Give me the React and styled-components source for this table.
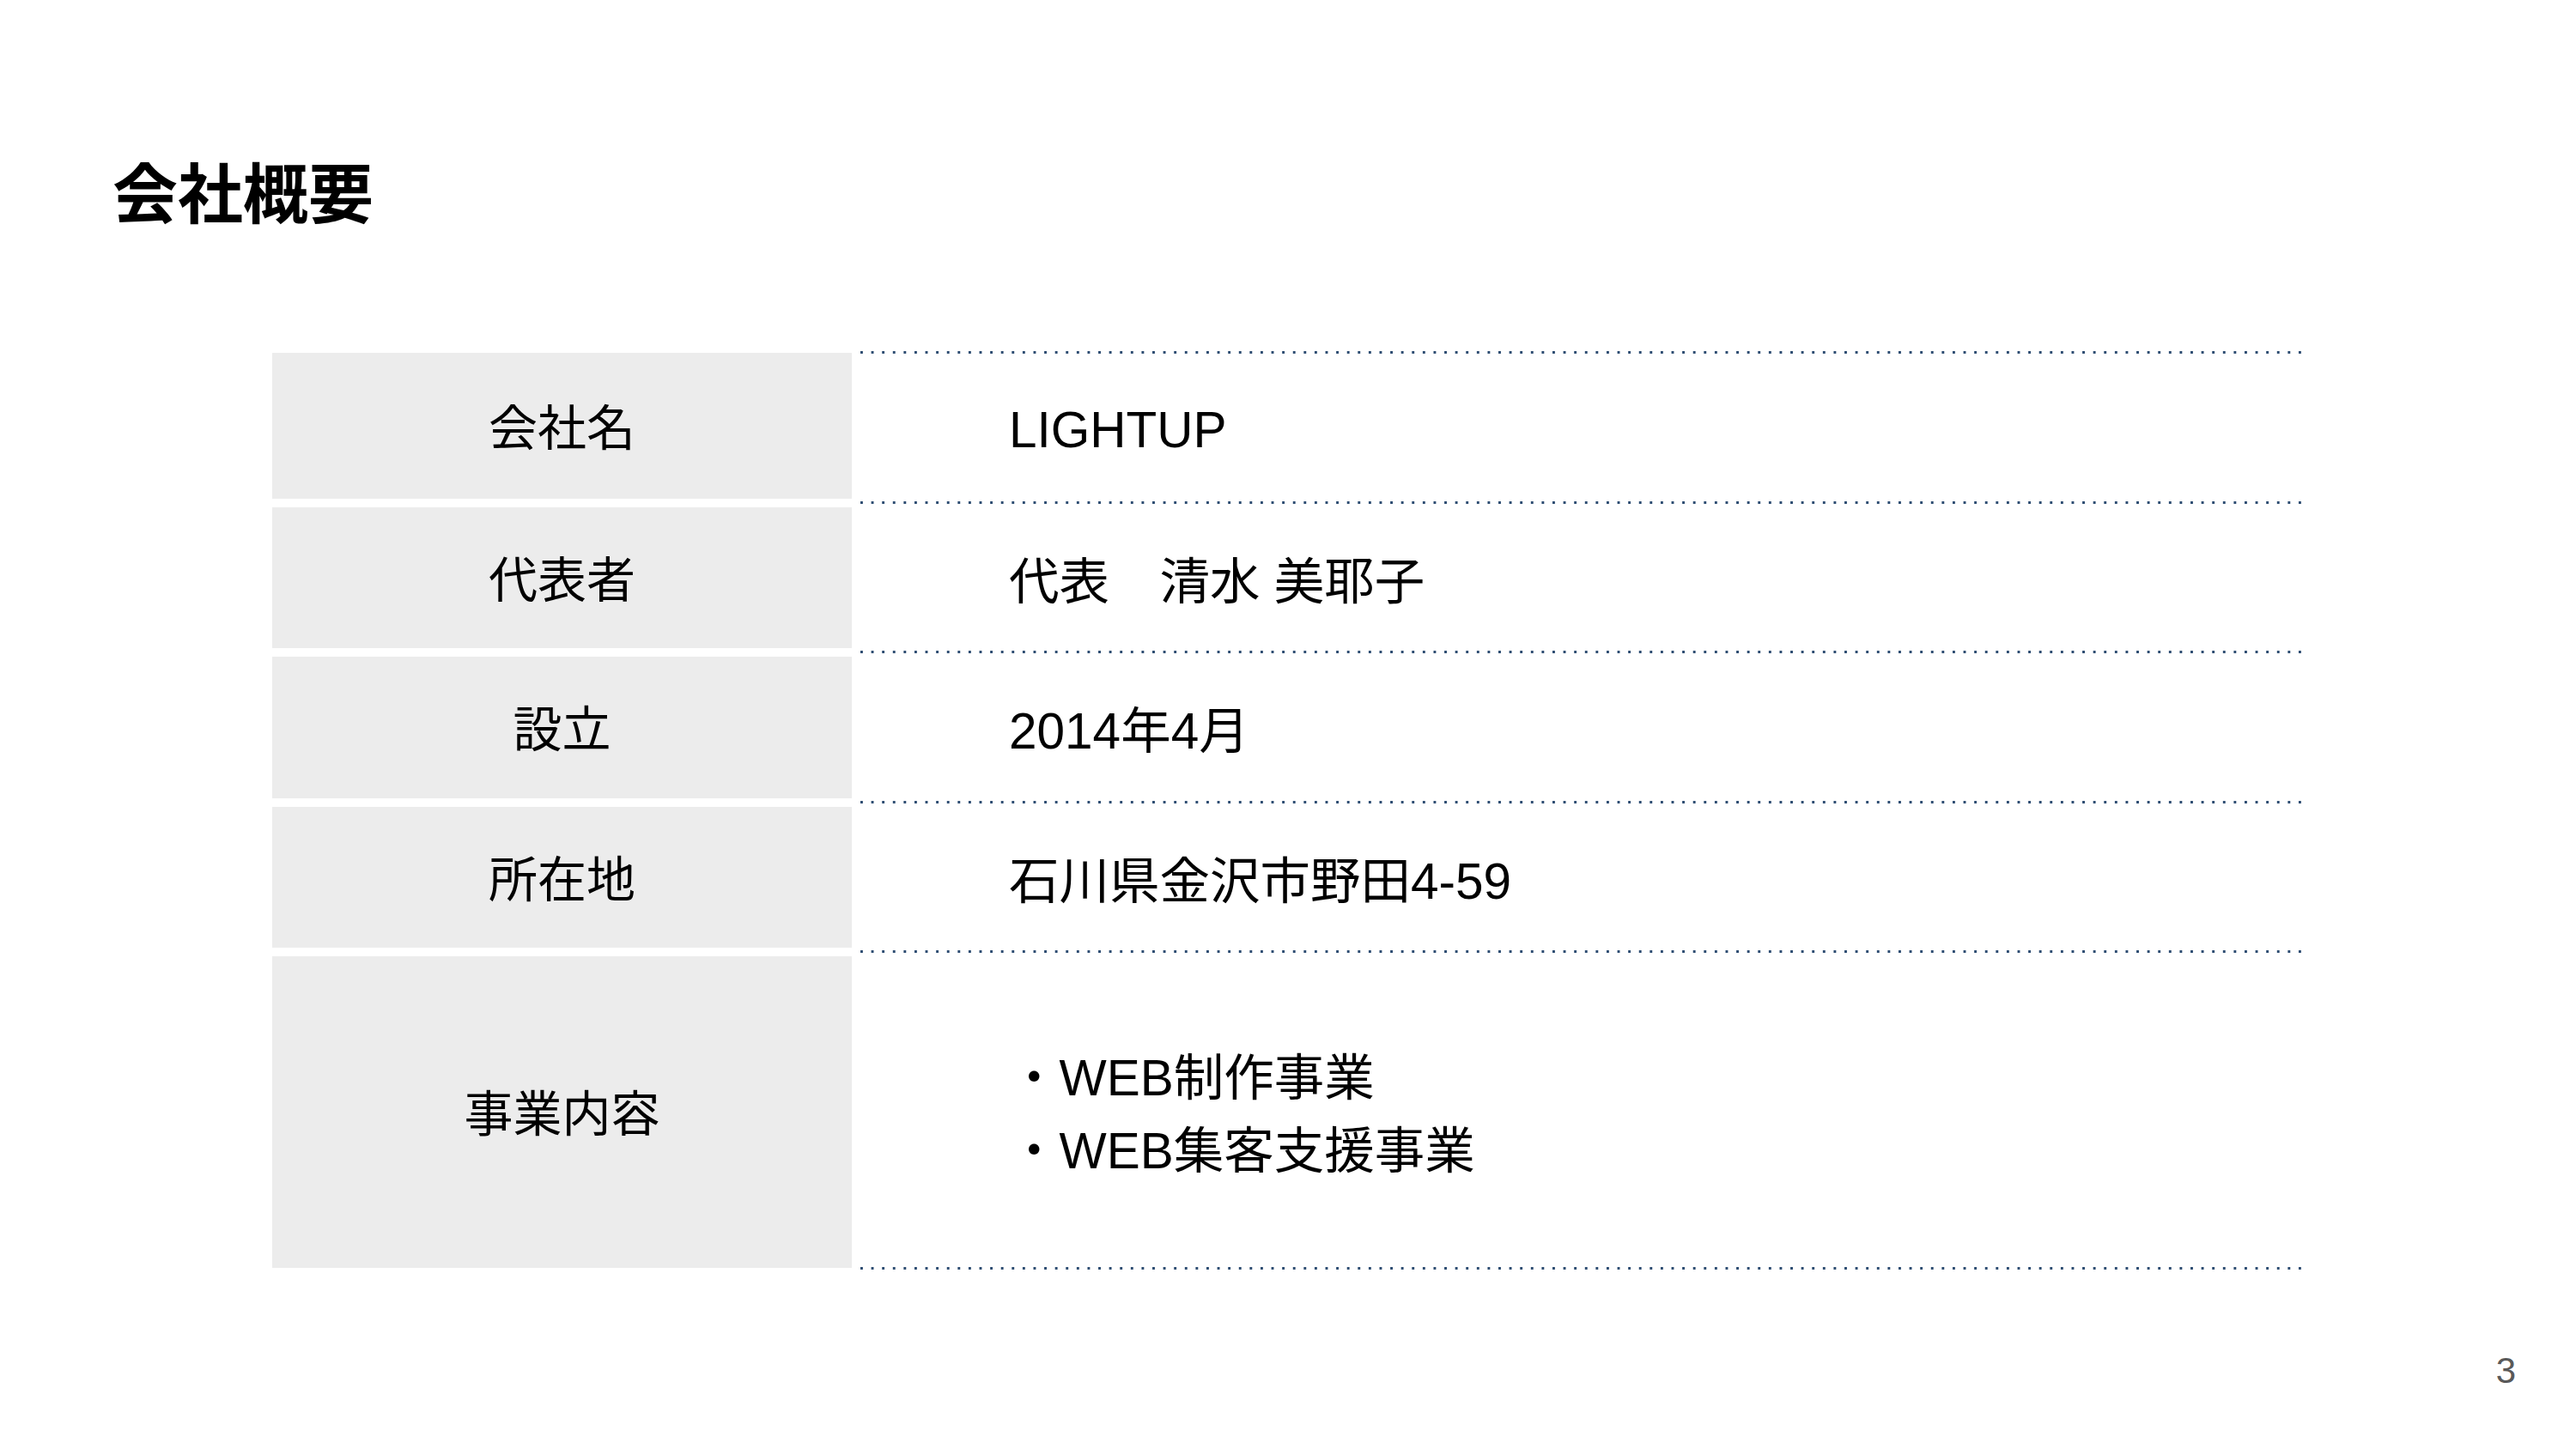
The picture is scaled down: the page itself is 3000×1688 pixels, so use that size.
import React from "react";
import styled, { createGlobalStyle } from "styled-components";

const Global = createGlobalStyle`
  html, body { margin: 0; padding: 0; background: #ffffff; }
  body {
    font-family: "Liberation Sans", "Noto Sans CJK JP", sans-serif;
    color: #000000;
  }
`;

const Slide = styled.div`
  width: 3000px;
  height: 1688px;
  box-sizing: border-box;
  display: flex;
  flex-direction: column;
  background: #ffffff;
`;

const Title = styled.h1`
  margin: 183px 0 0 131px;
  font-family: "Noto Sans CJK JP", sans-serif;
  font-weight: 700;
  font-size: 76px;
  line-height: 1;
  color: #000;
`;

const Table = styled.div`
  margin: 152px 0 0 317px;
  width: 2365px;
  display: flex;
  flex-direction: column;
`;

const dot = "linear-gradient(to right, #2e4d72 0 3px, transparent 3px 100%)";

const Row = styled.div`
  display: grid;
  grid-template-columns: 675px 1680px;
  column-gap: 10px;
  align-items: stretch;
`;

const Label = styled.div`
  box-sizing: border-box;
  height: ${(p) => p.$h}px;
  margin-bottom: ${(p) => (p.$last ? 0 : 10)}px;
  padding-top: 6px;
  background: #ececec;
  display: flex;
  align-items: center;
  justify-content: center;
  font-size: 57px;
  line-height: 1;
`;

const Value = styled.div`
  margin-top: -2px;
  margin-bottom: ${(p) => (p.$last ? -2 : 4)}px;
  padding: 4px 0 0 173px;
  display: flex;
  flex-direction: column;
  justify-content: center;
  font-size: 58.5px;
  line-height: 85px;
  background-image: ${(p) => (p.$first ? `${dot}, ${dot}` : dot)};
  background-position: ${(p) => (p.$first ? "left top, left bottom" : "left bottom")};
  background-repeat: repeat-x;
  background-size: 12.6px 3px;
`;

const Line = styled.div`
  white-space: pre;
`;

const Footer = styled.div`
  margin-top: auto;
  display: flex;
  justify-content: flex-end;
  padding: 0 70px 70px 0;
`;

const PageNo = styled.span`
  font-family: "Liberation Sans", sans-serif;
  font-size: 42px;
  line-height: 42px;
  color: #595959;
`;

const rows = [
  { label: "会社名", h: 170, lines: ["LIGHTUP"] },
  { label: "代表者", h: 164, lines: ["代表\u3000清水 美耶子"] },
  { label: "設立", h: 165, lines: ["2014年4月"] },
  { label: "所在地", h: 164, lines: ["石川県金沢市野田4-59"] },
  { label: "事業内容", h: 363, lines: ["・WEB制作事業", "・WEB集客支援事業"] },
];

export default function App() {
  return (
    <>
      <Global />
      <Slide>
        <Title>会社概要</Title>
        <Table>
          {rows.map((r, i) => (
            <Row key={r.label}>
              <Label $h={r.h} $last={i === rows.length - 1}>
                {r.label}
              </Label>
              <Value $first={i === 0} $last={i === rows.length - 1}>
                {r.lines.map((l) => (
                  <Line key={l}>{l}</Line>
                ))}
              </Value>
            </Row>
          ))}
        </Table>
        <Footer>
          <PageNo>3</PageNo>
        </Footer>
      </Slide>
    </>
  );
}
